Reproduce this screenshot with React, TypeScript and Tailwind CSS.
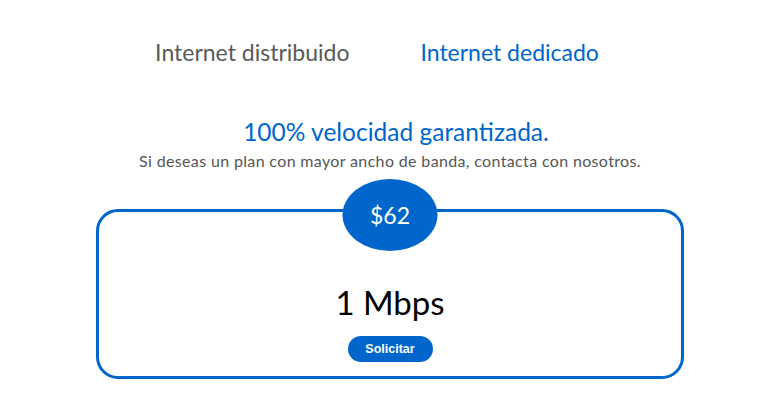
export default function App() {
  return (
    <div className="w-[784px] h-[417px] bg-white overflow-hidden" style={{ fontFamily: "Lato, 'Open Sans', sans-serif" }}>
      <div className="w-[780px] flex flex-col items-center">
        <div className="flex items-center gap-[71px] pt-[35px] h-[69px] pr-[26px]">
          <span className="text-[23px] leading-[32px] text-[#5a5a5a]">Internet distribuido</span>
          <span className="text-[23px] leading-[32px] text-[#0066cc]">Internet dedicado</span>
        </div>
        <div className="mt-[48px] text-[24.5px] leading-[30px] text-[#0066cc] pl-[12px]">100% velocidad garantizada.</div>
        <div className="mt-[4px] text-[16px] leading-[20px] tracking-[0.35px] text-[#555]">Si deseas un plan con mayor ancho de banda, contacta con nosotros.</div>
        <div className="relative mt-[38px] w-[588px] h-[170px] border-[3px] border-[#0066cc] rounded-[22px] flex flex-col items-center">
          <div className="absolute left-1/2 -translate-x-1/2 top-[-33px] w-[95px] h-[72px] rounded-[50%] bg-[#0066cc] flex items-center justify-center text-white text-[23px]">$62</div>
          <div className="mt-[72px] text-[33px] leading-[36px] text-black">1 Mbps</div>
          <button className="mt-[16px] w-[85px] h-[26px] rounded-full bg-[#0066cc] text-white text-[12.5px] font-bold" style={{ fontFamily: "'Liberation Sans', Arial, sans-serif" }}>Solicitar</button>
        </div>
      </div>
    </div>
  );
}
